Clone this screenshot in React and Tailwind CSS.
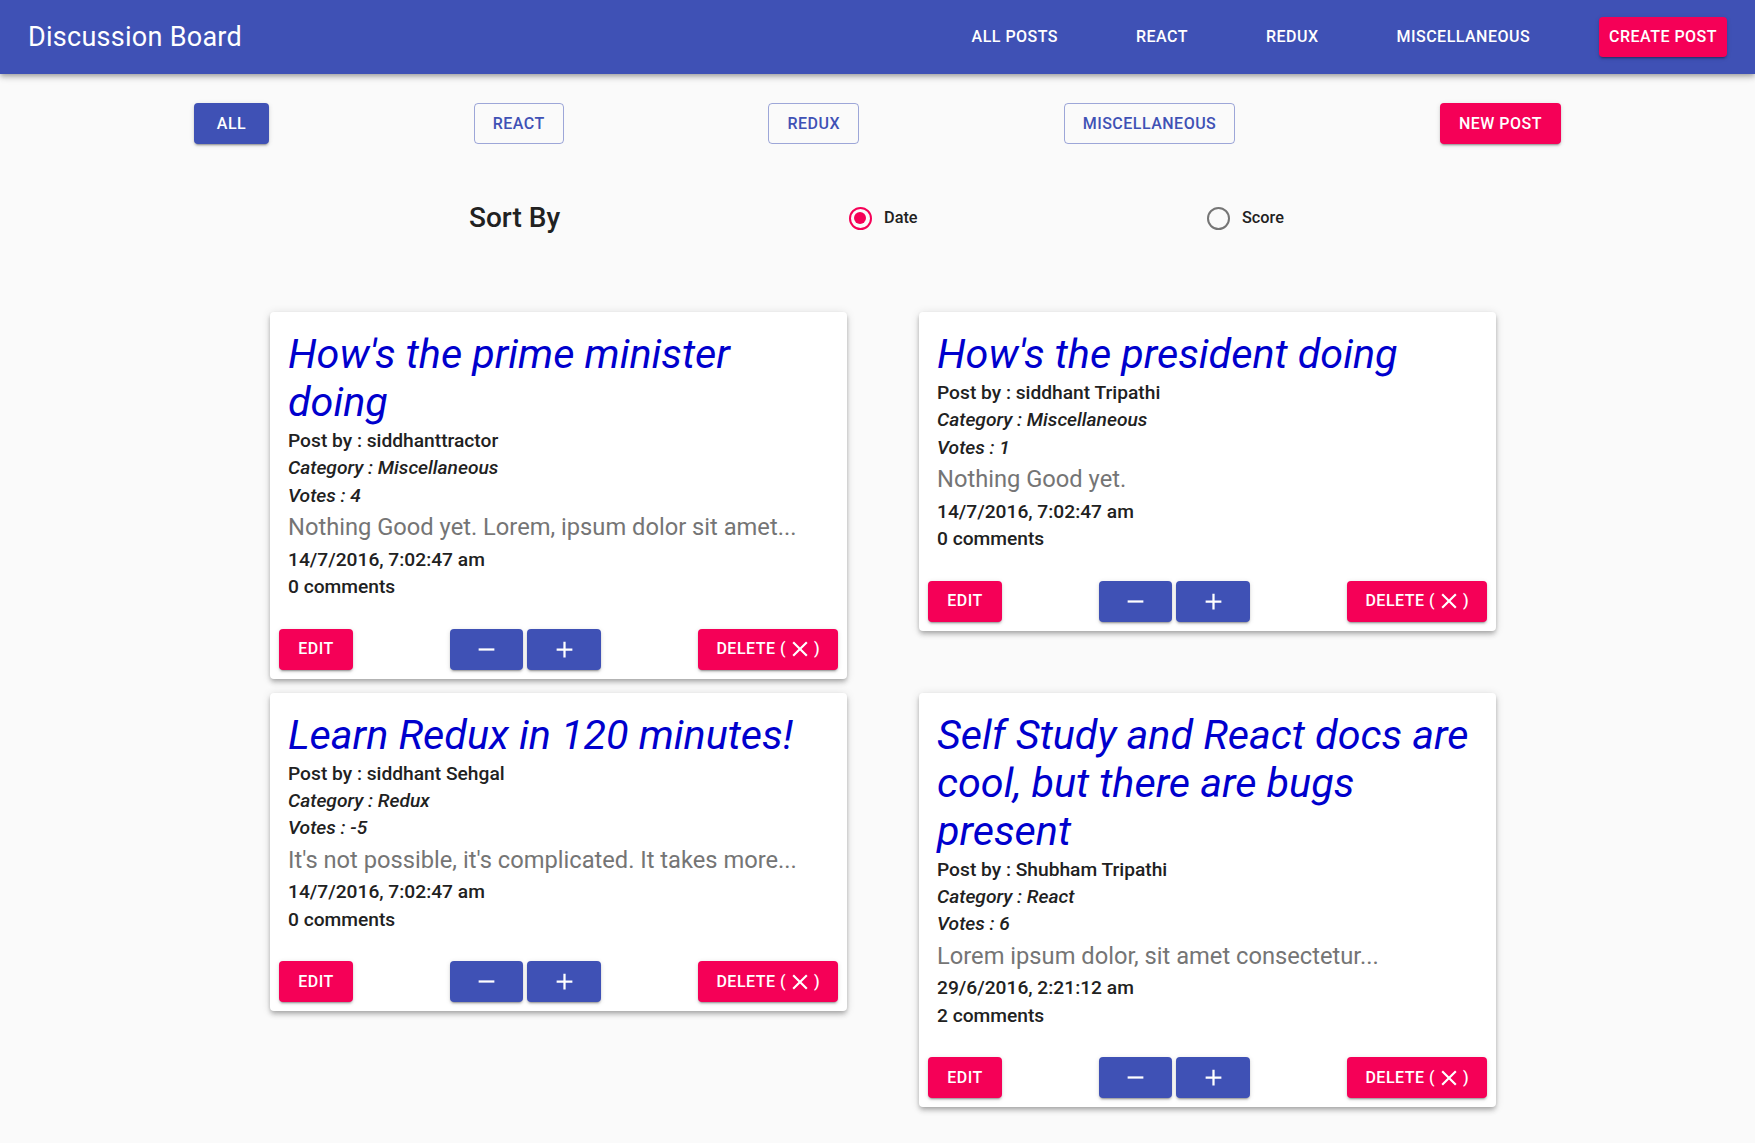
const posts = [
  {
    id: 1,
    title: "How's the prime minister doing",
    author: "siddhanttractor",
    category: "Miscellaneous",
    votes: 4,
    body: "Nothing Good yet. Lorem, ipsum dolor sit amet...",
    date: "14/7/2016, 7:02:47 am",
    comments: 0,
  },
  {
    id: 2,
    title: "How's the president doing",
    author: "siddhant Tripathi",
    category: "Miscellaneous",
    votes: 1,
    body: "Nothing Good yet.",
    date: "14/7/2016, 7:02:47 am",
    comments: 0,
  },
  {
    id: 3,
    title: "Learn Redux in 120 minutes!",
    author: "siddhant Sehgal",
    category: "Redux",
    votes: -5,
    body: "It's not possible, it's complicated. It takes more...",
    date: "14/7/2016, 7:02:47 am",
    comments: 0,
  },
  {
    id: 4,
    title: "Self Study and React docs are cool, but there are bugs present",
    author: "Shubham Tripathi",
    category: "React",
    votes: 6,
    body: "Lorem ipsum dolor, sit amet consectetur...",
    date: "29/6/2016, 2:21:12 am",
    comments: 2,
  },
]

const btnShadow =
  "shadow-[0_3px_1px_-2px_rgba(0,0,0,0.2),0_2px_2px_0_rgba(0,0,0,0.14),0_1px_5px_0_rgba(0,0,0,0.12)]"

function Icon({ d, size = 27 }) {
  return (
    <svg width={size} height={size} viewBox="0 0 24 24" fill="currentColor">
      <path d={d} />
    </svg>
  )
}

const ADD = "M19 13h-6v6h-2v-6H5v-2h6V5h2v6h6v2z"
const REMOVE = "M19 13H5v-2h14v2z"
const CLOSE =
  "M19 6.41L17.59 5 12 10.59 6.41 5 5 6.41 10.59 12 5 17.59 6.41 19 12 13.41 17.59 19 19 17.59 13.41 12z"

function Radio({ checked, label }) {
  return (
    <label className="flex items-center">
      <span className="w-[48px] h-[48px] flex items-center justify-center">
        {checked ? (
          <span className="w-[23px] h-[23px] rounded-full border-[2.3px] border-[#f50057] flex items-center justify-center">
            <span className="w-[11.5px] h-[11.5px] rounded-full bg-[#f50057]" />
          </span>
        ) : (
          <span className="w-[23px] h-[23px] rounded-full border-[2.3px] border-[#757575]" />
        )}
      </span>
      <span className="text-[16.3px] font-medium text-[#212121]">{label}</span>
    </label>
  )
}

function PostCard({ post }) {
  return (
    <div className="bg-white rounded-[4px] shadow-[0_2px_4px_-1px_rgba(0,0,0,0.2),0_4px_5px_0_rgba(0,0,0,0.14),0_1px_10px_0_rgba(0,0,0,0.12)]">
      <div className="pt-[18px] pb-[18px] px-[18px] text-[19.2px] leading-[27.4px] text-[#212121]">
        <h2 className="text-[41.3px] leading-[48px] mb-[1px] italic font-normal text-[#0000cd]">{post.title}</h2>
        <p className="font-medium">Post by : {post.author}</p>
        <p className="font-medium italic">Category : {post.category}</p>
        <p className="font-medium italic">Votes : {post.votes}</p>
        <p className="text-[23.7px] leading-[36.6px] text-[#757575]">{post.body}</p>
        <p className="font-medium">{post.date}</p>
        <p className="font-medium">{post.comments} comments</p>
      </div>
      <div className="flex items-center justify-between px-[9px] pt-[10px] pb-[9px]">
        <button className={`h-[41px] min-w-[74px] px-[18px] rounded-[4px] bg-[#f50057] text-white text-[16px] font-medium tracking-[0.03em] ${btnShadow}`}>
          EDIT
        </button>
        <div className="flex gap-[4px]">
          <button className={`h-[41px] w-[73px] rounded-[4px] bg-[#3f51b5] text-white flex items-center justify-center ${btnShadow}`}>
            <Icon d={REMOVE} />
          </button>
          <button className={`h-[41px] w-[74px] rounded-[4px] bg-[#3f51b5] text-white flex items-center justify-center ${btnShadow}`}>
            <Icon d={ADD} />
          </button>
        </div>
        <button className={`h-[41px] px-[18px] rounded-[4px] bg-[#f50057] text-white text-[16px] font-medium tracking-[0.03em] flex items-center ${btnShadow}`}>
          DELETE (<span className="mx-[1px]"><Icon d={CLOSE} size={26} /></span>)
        </button>
      </div>
    </div>
  )
}

export default function App() {
  const filters = ["REACT", "REDUX", "MISCELLANEOUS"]
  return (
    <div className="min-h-[1143px] bg-[#fafafa] font-['Roboto',sans-serif]">
      <header className="h-[74px] bg-[#3f51b5] flex items-center justify-between pl-[28px] pr-[28px] shadow-[0_2px_4px_-1px_rgba(0,0,0,0.2),0_4px_5px_0_rgba(0,0,0,0.14),0_1px_10px_0_rgba(0,0,0,0.12)]">
        <h1 className="text-white text-[27px] font-normal tracking-[0.01em]">Discussion Board</h1>
        <nav className="flex items-center gap-[60px]">
          {["ALL POSTS", "REACT", "REDUX", "MISCELLANEOUS"].map((n) => (
            <button key={n} className="px-[9px] h-[41px] text-white text-[16px] font-medium tracking-[0.03em]">
              {n}
            </button>
          ))}
          <button className={`h-[40px] px-[10px] rounded-[4px] bg-[#f50057] text-white text-[16px] font-medium tracking-[0.03em] ${btnShadow}`}>
            CREATE POST
          </button>
        </nav>
      </header>

      <div className="flex items-center justify-between px-[194px] mt-[29px]">
        <button className={`h-[41px] min-w-[75px] px-[18px] rounded-[4px] bg-[#3f51b5] text-white text-[16px] font-medium tracking-[0.03em] ${btnShadow}`}>
          ALL
        </button>
        {filters.map((f) => (
          <button key={f} className="h-[41px] px-[18px] rounded-[4px] border border-[#3f51b5]/50 text-[#3f51b5] text-[16px] font-medium tracking-[0.03em]">
            {f}
          </button>
        ))}
        <button className={`h-[41px] px-[19px] rounded-[4px] bg-[#f50057] text-white text-[16px] font-medium tracking-[0.03em] ${btnShadow}`}>
          NEW POST
        </button>
      </div>

      <div className="flex items-center pl-[469px] mt-[50px] h-[48px]">
        <h3 className="w-[367px] text-[28px] font-medium text-[#212121]">Sort By</h3>
        <div className="w-[358px]">
          <Radio checked label="Date" />
        </div>
        <Radio label="Score" />
      </div>

      <div className="grid grid-cols-[577px_577px] gap-x-[72px] gap-y-[14px] items-start pl-[270px] mt-[70px] pb-[35px]">
        {posts.map((p) => (
          <PostCard key={p.id} post={p} />
        ))}
      </div>
    </div>
  )
}
